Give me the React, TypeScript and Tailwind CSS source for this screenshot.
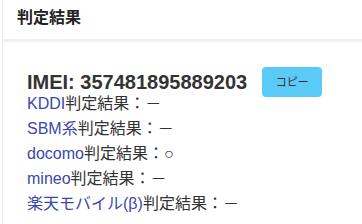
const rows = [
  { name: "KDDI", result: "－" },
  { name: "SBM系", result: "－" },
  { name: "docomo", result: "○" },
  { name: "mineo", result: "－" },
  { name: "楽天モバイル(β)", result: "－" },
];

const App = () => {
  return (
    <div className="w-[362px] h-[224px] overflow-hidden bg-white font-['Liberation_Sans','Noto_Sans_CJK_JP',sans-serif]">
      <div className="ml-[2px] h-full border-l border-[#ececec] bg-white">
        <div className="h-[42px] pl-[14px] pt-[8px] border-b-[3px] border-[#f0f0f0]">
          <div className="text-[16px] font-bold text-[#222] leading-[20px]">判定結果</div>
        </div>
        <div className="pl-[24px] pt-[31px]">
          <div className="h-[18px] flex items-center">
            <span className="text-[20px] font-bold text-[#333] leading-none">IMEI: 357481895889203</span>
            <button className="ml-[15px] w-[60px] h-[30px] shrink-0 rounded-[4px] bg-[#5ccaf6] text-[11px] text-[#333] leading-none">
              コピー
            </button>
          </div>
          <ul className="text-[16px] leading-[25px] text-[#333]">
            {rows.map((r) => (
              <li key={r.name} className="whitespace-nowrap">
                <a className="text-[#3949ab]">{r.name}</a>
                判定結果：{r.result}
              </li>
            ))}
          </ul>
        </div>
      </div>
    </div>
  );
};

export default App;
